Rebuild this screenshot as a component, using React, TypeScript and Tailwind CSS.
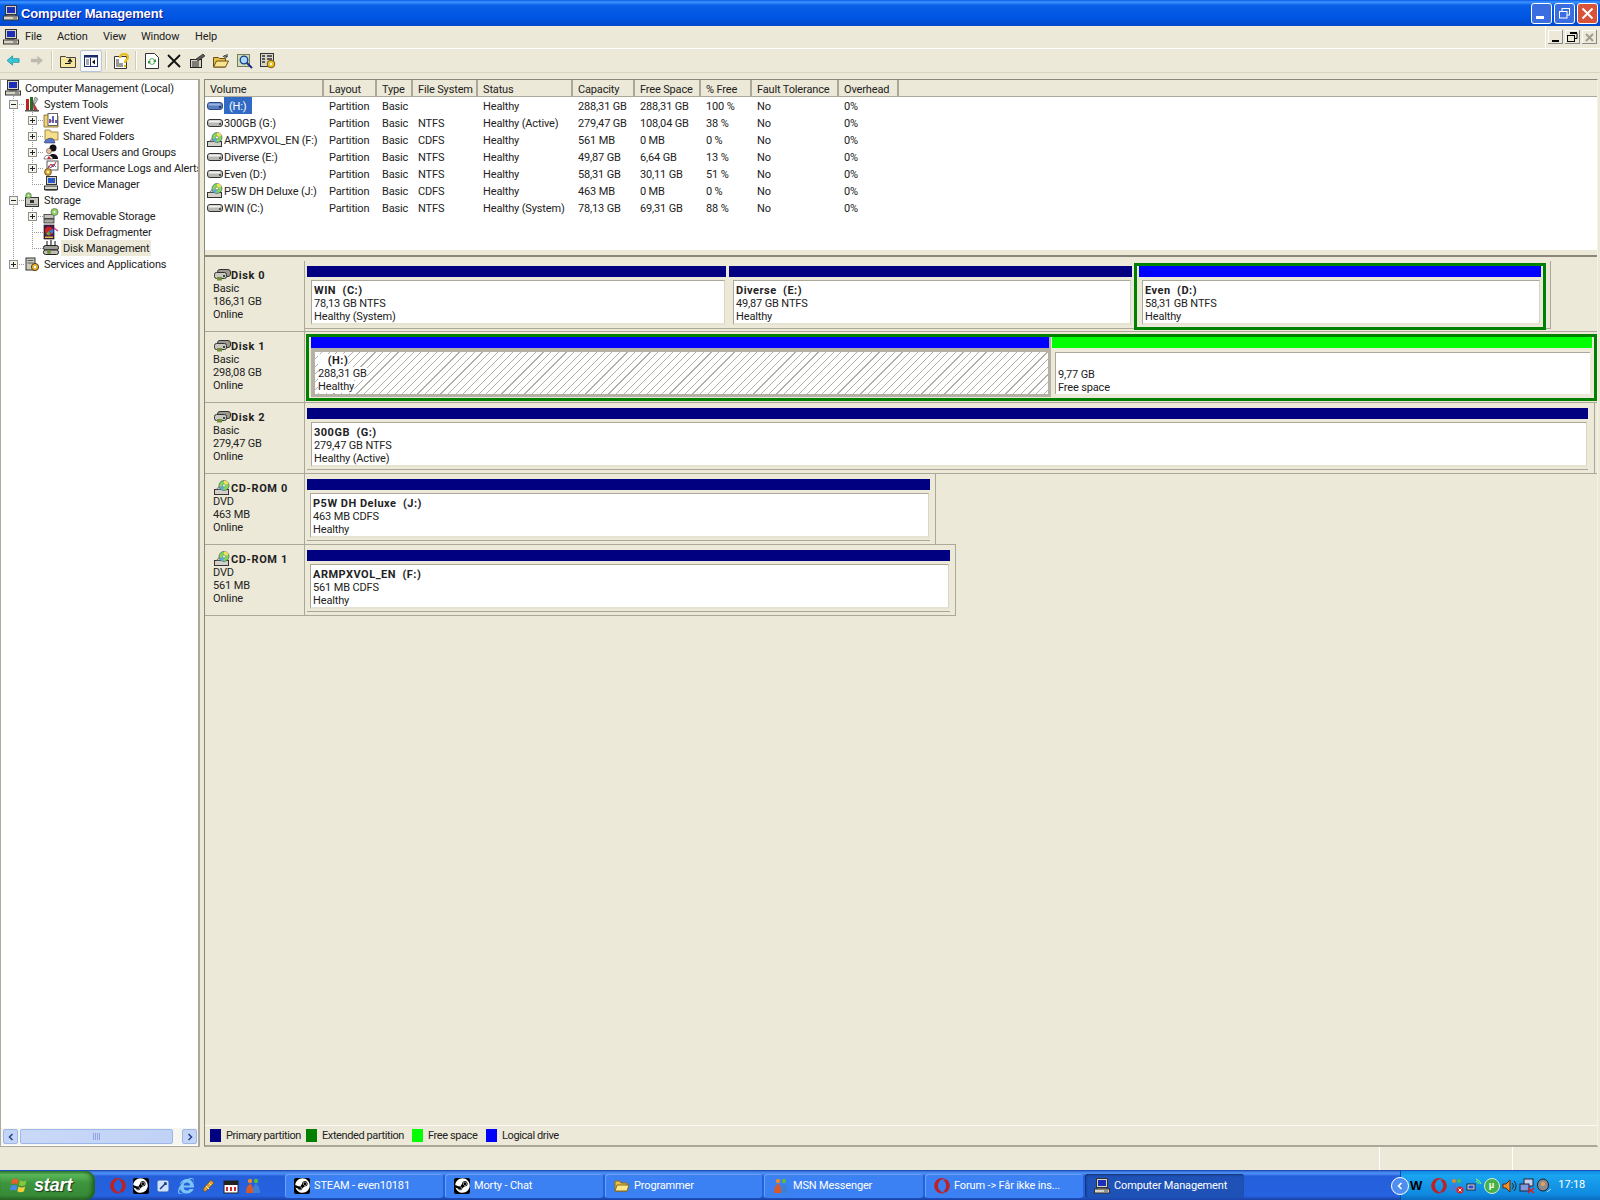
import React from "react";
import { FaSteam, FaOpera, FaInternetExplorer } from "react-icons/fa";

type SP = { className?: string };

const Pc = ({ className = "" }: SP) => (
  <svg viewBox="0 0 16 16" className={"w-4 h-4 shrink-0 " + className}>
    <rect x="2.5" y="0.5" width="11" height="9" fill="#d6d3c4" stroke="#333" />
    <rect x="4" y="2" width="8" height="6" fill="#1c2fb8" />
    <rect x="4" y="10" width="8" height="1" fill="#888" />
    <rect x="0.5" y="11" width="15" height="4" fill="#d6d3c4" stroke="#333" />
    <rect x="10" y="12.5" width="4" height="1" fill="#555" />
  </svg>
);

const Drive = ({ className = "", selected = false }: SP & { selected?: boolean }) => (
  <svg viewBox="0 0 16 16" className={"w-4 h-4 shrink-0 " + className}>
    <rect x="0.5" y="4.5" width="15" height="7" rx="2.5" fill={selected ? "#5b7fbe" : "#b9b9b4"} stroke={selected ? "#2a4a86" : "#333"} />
    <rect x="1.5" y="5.5" width="12" height="2" rx="1" fill={selected ? "#9ab4e0" : "#f1f1ef"} />
    <rect x="12" y="8" width="2" height="2" fill={selected ? "#1c3566" : "#555"} />
  </svg>
);

const CdDrive = ({ className = "" }: SP) => (
  <svg viewBox="0 0 16 16" className={"w-4 h-4 shrink-0 " + className}>
    <rect x="0.5" y="9.5" width="14" height="5" fill="#d4d2c8" stroke="#333" />
    <path d="M2.5 9.5 L5 6.5 L7 9.5Z" fill="#cfcfc8" stroke="#333" strokeWidth="0.6" />
    <circle cx="10" cy="5.5" r="5" fill="#7ed957" stroke="#446" strokeWidth="0.6" />
    <path d="M10 5.5 L14.5 3.5 A5 5 0 0 0 10 .5Z" fill="#f0e05a" />
    <path d="M10 5.5 L5.5 7.5 A5 5 0 0 0 9 10.4Z" fill="#5aa8e8" />
    <circle cx="10" cy="5.5" r="1.4" fill="#fff" stroke="#555" strokeWidth="0.5" />
  </svg>
);

const DiskSmall = ({ className = "" }: SP) => (
  <svg viewBox="0 0 17 12" className={"w-[17px] h-3 shrink-0 " + className}>
    <rect x="3.5" y="0.5" width="13" height="7" rx="2.5" fill="#9b9b94" stroke="#333" />
    <rect x="0.5" y="3.5" width="12" height="6" rx="2" fill="#c9c9c0" stroke="#333" />
    <path d="M3 11.5h5V8H3Z" fill="#6f8f3c" />
    <rect x="9" y="6" width="2" height="2" fill="#444" />
  </svg>
);

const IconSysTools = () => (
  <svg viewBox="0 0 16 16" className="w-4 h-4 shrink-0">
    <rect x="2" y="3" width="3" height="12" fill="#b22" />
    <rect x="6" y="1" width="3" height="14" fill="#2a6a2a" />
    <path d="M9 6l5 9h-4z" fill="#c33" stroke="#333" strokeWidth=".5" />
    <path d="M11 1l3 2-3 5-2-1z" fill="#bbb" stroke="#444" strokeWidth=".5" />
    <rect x="1" y="14" width="14" height="1.5" fill="#555" />
  </svg>
);
const IconEvent = () => (
  <svg viewBox="0 0 16 16" className="w-4 h-4 shrink-0">
    <path d="M1 3h5l1 1h8v11H1z" fill="#f0d27a" stroke="#7a6420" strokeWidth=".8" />
    <rect x="5" y="1.5" width="9.5" height="12" fill="#fff" stroke="#444" strokeWidth=".8" />
    <path d="M7 11V7M10 11V4M13 11V8" stroke="#2233aa" strokeWidth="1.5" />
    <path d="M7 9h3" stroke="#c22" />
  </svg>
);
const IconShared = () => (
  <svg viewBox="0 0 16 16" className="w-4 h-4 shrink-0">
    <path d="M2 2h5l1 2h7v8H2z" fill="#f6dd8a" stroke="#8a7430" strokeWidth=".8" />
    <path d="M1 14c3-4 8-5 10-2l1 3H2z" fill="#5b77cc" stroke="#224" strokeWidth=".5" />
  </svg>
);
const IconUsers = () => (
  <svg viewBox="0 0 16 16" className="w-4 h-4 shrink-0">
    <circle cx="10" cy="4" r="3.5" fill="#111" />
    <path d="M5 15c0-6 9-7 10-1v1z" fill="#111" />
    <circle cx="6" cy="7" r="2.6" fill="#e8c39e" stroke="#432" strokeWidth=".5" />
    <path d="M1 15c0-5 8-5 9 0z" fill="#fff" stroke="#333" strokeWidth=".6" />
    <path d="M4 15l2-3 2 3z" fill="#c22" />
  </svg>
);
const IconPerf = () => (
  <svg viewBox="0 0 16 16" className="w-4 h-4 shrink-0">
    <rect x="4" y="1" width="11" height="9" fill="#fff" stroke="#333" strokeWidth=".8" />
    <path d="M5 8l3-4 2 3 3-5" fill="none" stroke="#c22" />
    <path d="M5 6l3 2 2-4 3 3" fill="none" stroke="#228" strokeWidth=".7" />
    <circle cx="5" cy="12" r="3.4" fill="#e0a838" stroke="#5a4310" strokeWidth=".8" />
    <circle cx="5" cy="12" r="1.2" fill="#fff2c4" />
  </svg>
);
const IconDevMgr = () => (
  <svg viewBox="0 0 16 16" className="w-4 h-4 shrink-0">
    <rect x="3.5" y=".5" width="10" height="8" fill="#d8d5c8" stroke="#333" />
    <rect x="5" y="2" width="7" height="5" fill="#2a5ac8" />
    <rect x="1.5" y="10" width="13" height="3.5" fill="#d8d5c8" stroke="#333" />
    <path d="M1 15l2-1h10l2 1z" fill="#777" />
  </svg>
);
const IconStorage = () => (
  <svg viewBox="0 0 16 16" className="w-4 h-4 shrink-0">
    <rect x="1.5" y="5.5" width="13" height="9" fill="#c9c8bf" stroke="#333" />
    <rect x="6" y="8" width="4" height="3" fill="#333" />
    <circle cx="4.5" cy="3.5" r="2.8" fill="#8ed060" stroke="#445" strokeWidth=".5" />
    <circle cx="4.5" cy="3.5" r=".8" fill="#fff" />
    <rect x="2.5" y="12" width="11" height="1" fill="#777" />
  </svg>
);
const IconRemovable = () => (
  <svg viewBox="0 0 16 16" className="w-4 h-4 shrink-0">
    <rect x="1" y="6.5" width="10" height="4" fill="#c4c3ba" stroke="#333" strokeWidth=".8" />
    <rect x="1" y="11" width="10" height="4" fill="#a9a89f" stroke="#333" strokeWidth=".8" />
    <circle cx="11.5" cy="4" r="3.6" fill="#8ed060" stroke="#445" strokeWidth=".5" />
    <circle cx="11.5" cy="4" r="1" fill="#fff" />
  </svg>
);
const IconDefrag = () => (
  <svg viewBox="0 0 16 16" className="w-4 h-4 shrink-0">
    <rect x="1" y="1" width="10" height="14" fill="#4a1a4a" stroke="#222" strokeWidth=".7" />
    <circle cx="6" cy="7" r="4.2" fill="#c22" />
    <path d="M6 7l4-2a4.4 4.4 0 0 1-1 5z" fill="#2c7de0" />
    <path d="M6 7l-3 3a4.4 4.4 0 0 0 4 1z" fill="#44bb44" />
    <path d="M11 4l4 3" stroke="#d040a0" strokeWidth="1.5" />
    <rect x="2" y="12.5" width="8" height="1.5" fill="#e0c040" />
  </svg>
);
const IconDiskMgmt = () => (
  <svg viewBox="0 0 16 16" className="w-4 h-4 shrink-0">
    <path d="M4 1v4M8 0v5M12 1v4" stroke="#333" strokeWidth="1.2" />
    <rect x=".5" y="5.5" width="15" height="4.5" rx="2" fill="#9d9c92" stroke="#222" />
    <rect x=".5" y="10" width="15" height="4.5" rx="2" fill="#c0bfb4" stroke="#222" />
    <circle cx="6" cy="12" r="2" fill="#6f8f3c" />
  </svg>
);
const IconServices = () => (
  <svg viewBox="0 0 16 16" className="w-4 h-4 shrink-0">
    <rect x="2" y="2" width="9" height="12" fill="#cfcdc0" stroke="#333" />
    <rect x="3.5" y="4" width="6" height="1" fill="#555" />
    <rect x="3.5" y="6.5" width="6" height="1" fill="#555" />
    <circle cx="11" cy="11" r="3.6" fill="#e4b032" stroke="#5a4310" />
    <circle cx="11" cy="11" r="1.2" fill="#fff" />
  </svg>
);

const Guide = ({ level, exp, last }: { level: number; exp?: "+" | "-"; last?: boolean }) => {
  const w = level === 0 ? 4 : level === 1 ? 23 : 42;
  const cx = level === 1 ? 12 : 31;
  return (
    <svg width={w} height={16} className="shrink-0">
      {level === 2 && <line x1="12.5" y1="0" x2="12.5" y2="16" stroke="#999" strokeDasharray="1 1" />}
      {level >= 1 && (
        <>
          <line x1={cx + 0.5} y1="0" x2={cx + 0.5} y2={last ? 8 : 16} stroke="#999" strokeDasharray="1 1" />
          <line x1={cx} y1="8.5" x2={w} y2="8.5" stroke="#999" strokeDasharray="1 1" />
        </>
      )}
      {exp && (
        <>
          <rect x={cx - 4 + 0.5} y="4.5" width="8" height="8" fill="#f4f3ec" stroke="#8f8f88" />
          <line x1={cx - 2} y1="8.5" x2={cx + 3} y2="8.5" stroke="#222" />
          {exp === "+" && <line x1={cx + 0.5} y1="6" x2={cx + 0.5} y2="11" stroke="#222" />}
        </>
      )}
    </svg>
  );
};

const TreeRow = ({ level, exp, last, icon, text, sel }: { level: number; exp?: "+" | "-"; last?: boolean; icon: React.ReactNode; text: string; sel?: boolean }) => (
  <div className="flex h-4 items-center whitespace-nowrap overflow-hidden">
    <Guide level={level} exp={exp} last={last} />
    {icon}
    <span className={"ml-[2px] px-[2px] h-4 pt-px leading-4 " + (sel ? "bg-[#ece9d8]" : "")}>{text}</span>
  </div>
);

const cols = [
  { t: "Volume", w: "w-[119px]" },
  { t: "Layout", w: "w-[53px]" },
  { t: "Type", w: "w-[36px]" },
  { t: "File System", w: "w-[65px]" },
  { t: "Status", w: "w-[95px]" },
  { t: "Capacity", w: "w-[62px]" },
  { t: "Free Space", w: "w-[66px]" },
  { t: "% Free", w: "w-[51px]" },
  { t: "Fault Tolerance", w: "w-[87px]" },
  { t: "Overhead", w: "w-[60px]" },
];

const rows = [
  ["(H:)", "Partition", "Basic", "", "Healthy", "288,31 GB", "288,31 GB", "100 %", "No", "0%"],
  ["300GB (G:)", "Partition", "Basic", "NTFS", "Healthy (Active)", "279,47 GB", "108,04 GB", "38 %", "No", "0%"],
  ["ARMPXVOL_EN (F:)", "Partition", "Basic", "CDFS", "Healthy", "561 MB", "0 MB", "0 %", "No", "0%"],
  ["Diverse (E:)", "Partition", "Basic", "NTFS", "Healthy", "49,87 GB", "6,64 GB", "13 %", "No", "0%"],
  ["Even (D:)", "Partition", "Basic", "NTFS", "Healthy", "58,31 GB", "30,11 GB", "51 %", "No", "0%"],
  ["P5W DH Deluxe (J:)", "Partition", "Basic", "CDFS", "Healthy", "463 MB", "0 MB", "0 %", "No", "0%"],
  ["WIN (C:)", "Partition", "Basic", "NTFS", "Healthy (System)", "78,13 GB", "69,31 GB", "88 %", "No", "0%"],
];

const DiskLabel = ({ name, lines, cd }: { name: string; lines: string[]; cd?: boolean }) => (
  <div className="w-[100px] shrink-0 border-r border-[#aca899] pl-[8px] pt-[8px] leading-[13px]">
    <div className="flex items-center h-[13px] ml-px font-bold">
      {cd ? <CdDrive className="mr-px -mt-[2px]" /> : <DiskSmall className="-mt-[2px]" />}
      <span className="tracking-[0.6px]">{name}</span>
    </div>
    {lines.map((l) => (
      <div key={l}>{l}</div>
    ))}
  </div>
);

const Box = ({ name, l2, l3, className = "" }: { name: string; l2: string; l3: string; className?: string }) => (
  <div className={"h-[45px] mt-[3px] mr-[1px] border-t border-l border-[#aca899] border-b-2 border-b-[#e6e3d3] border-r border-r-[#d8d5c4] bg-white pl-[2px] pt-[3px] leading-[13px] whitespace-pre " + className}>
    <div className="font-bold tracking-[0.5px]">{name}</div>
    <div>{l2}</div>
    <div>{l3}</div>
  </div>
);

const Bar = ({ c }: { c: string }) => <div className={"h-[11px] " + c} />;

const Legend = ({ c, t, w }: { c: string; t: string; w: string }) => (
  <div className={"flex items-center gap-[5px] shrink-0 whitespace-nowrap " + w}>
    <div className={"w-[11px] h-[13px] " + c} />
    <span className="tracking-[-0.4px] pt-px">{t}</span>
  </div>
);

const TbSep = ({ className = "" }: SP) => <div className={"w-px h-[19px] bg-[#d0ccb8] border-r border-white box-content shrink-0 " + className} />;

const TaskBtn = ({ icon, text, w, active }: { icon: React.ReactNode; text: string; w: string; active?: boolean }) => (
  <div className={"h-6 rounded-[3px] flex items-center pl-[9px] gap-[4px] text-white shrink-0 whitespace-nowrap overflow-hidden " + w + " " + (active ? "bg-[#1e52b7] shadow-[inset_1px_1px_2px_#13306f]" : "bg-[#3c81f3] shadow-[inset_1px_1px_0_#6aa0f8]")}>
    {icon}
    <span className="pt-px">{text}</span>
  </div>
);

const SteamBox = () => (
  <div className="w-4 h-4 bg-black rounded-[2px] flex items-center justify-center shrink-0">
    <FaSteam className="w-[15px] h-[15px] text-white" />
  </div>
);
const FolderIcon = () => (
  <svg viewBox="0 0 16 16" className="w-4 h-4 shrink-0">
    <path d="M1 3h5l1 2h6v8H1z" fill="#e8c048" stroke="#8a6a18" />
    <path d="M1 13l2-6h12l-2 6z" fill="#fbe48e" stroke="#8a6a18" />
  </svg>
);
const MsnIcon = ({ className = "" }: SP) => (
  <svg viewBox="0 0 16 16" className={"w-4 h-4 shrink-0 " + className}>
    <circle cx="5" cy="3" r="2.2" fill="#e88a2a" />
    <circle cx="11" cy="3" r="2.2" fill="#58b848" />
    <path d="M1 15c0-7 3-9 5-9l2 4v5z" fill="#d85a2a" />
    <path d="M15 15c0-7-3-9-5-9l-2 4v5z" fill="#3b7fd8" />
  </svg>
);
const WinLogo = () => (
  <svg viewBox="0 0 20 20" className="w-[19px] h-[19px] shrink-0">
    <path d="M2 4c2-1.500 5-1.500 7 0l-1 5c-2-1.500-5-1.500-7 0z" fill="#e2622a" />
    <path d="M10.500 4.500c2 1.300 5 1.300 7 0l-1.300 5c-2 1.300-5 1.300-7 0z" fill="#82c83a" />
    <path d="M.8 10.500c2-1.500 5-1.500 7 0l-1.300 5c-2-1.500-5-1.500-7 0z" fill="#4a8ae8" />
    <path d="M9 11c2 1.300 5 1.300 7 0l-1.300 5c-2 1.300-5 1.300-7 0z" fill="#f6cf3a" />
  </svg>
);

const Btn = ({ children, c }: { children: React.ReactNode; c: string }) => (
  <div className={"w-[21px] h-[21px] rounded-[3px] border border-white flex items-center justify-center " + c}>{children}</div>
);

export default function App() {
  return (
    <div className="w-[1600px] h-[1200px] flex flex-col overflow-hidden bg-[#ece9d8] text-[11px] tracking-[-0.15px] text-black font-['Roboto',sans-serif]">
      {/* title bar */}
      <div className="h-[26px] shrink-0 flex items-center pl-[3px] pr-[2px] bg-[linear-gradient(180deg,#0a5ae8_0%,#3d95ff_8%,#0a5fe8_20%,#0054e3_70%,#0048c8_100%)]">
        <Pc />
        <span className="ml-[2px] pt-[2px] text-white font-bold text-[13px] tracking-[-0.15px] font-['Liberation_Sans',sans-serif] [text-shadow:1px_1px_0_#0f1089]">Computer Management</span>
        <div className="ml-auto flex gap-[2px]">
          <Btn c="bg-[#3a6ee0]"><div className="w-[8px] h-[3px] bg-white mt-[9px] -ml-[3px]" /></Btn>
          <Btn c="bg-[#3a6ee0]">
            <svg viewBox="0 0 13 13" className="w-[13px] h-[13px]"><rect x="4" y="1.500" width="7.500" height="6.500" fill="none" stroke="#fff" /><rect x="1.500" y="4.500" width="7.500" height="6.500" fill="#3a6ee0" stroke="#fff" /></svg>
          </Btn>
          <Btn c="bg-[#d9533a]">
            <svg viewBox="0 0 13 13" className="w-[13px] h-[13px]"><path d="M1.500 1.500l10 10M11.500 1.500l-10 10" stroke="#fff" strokeWidth="2" /></svg>
          </Btn>
        </div>
      </div>

      {/* menu */}
      <div className="h-[23px] shrink-0 flex items-center border-b border-white pl-[3px] pr-[3px] text-[#222]">
        <Pc />
        <span className="ml-[6px] pt-px w-[32px]">File</span>
        <span className="pt-px w-[46px]">Action</span>
        <span className="pt-px w-[38px]">View</span>
        <span className="pt-px w-[54px]">Window</span>
        <span className="pt-px">Help</span>
        <div className="ml-auto flex gap-[2px] border-l border-white pl-[2px] h-full items-center">
          <div className="w-[15px] h-[14px] bg-[#ece9d8] shadow-[inset_-1px_-1px_0_#888,inset_1px_1px_0_#fff] flex items-end justify-center pb-[2px]"><div className="w-[7px] h-[2px] bg-black" /></div>
          <div className="w-[15px] h-[14px] bg-[#ece9d8] shadow-[inset_-1px_-1px_0_#888,inset_1px_1px_0_#fff] flex items-center justify-center">
            <svg viewBox="0 0 11 10" className="w-[11px] h-[10px]"><path d="M3 1.500h7v5H8M3 .5h7" stroke="#000" fill="none" /><rect x=".5" y="3.500" width="7" height="6" fill="#ece9d8" stroke="#000" /></svg>
          </div>
          <div className="w-[15px] h-[14px] bg-[#ece9d8] shadow-[inset_-1px_-1px_0_#888,inset_1px_1px_0_#fff] flex items-center justify-center">
            <svg viewBox="0 0 9 9" className="w-[9px] h-[9px]"><path d="M1 1l7 7M8 1L1 8" stroke="#a09d8e" strokeWidth="2" /></svg>
          </div>
        </div>
      </div>

      {/* toolbar */}
      <div className="h-[24px] shrink-0 flex items-center pl-[6px] border-b border-[#d8d4c0]">
        <svg viewBox="0 0 16 14" className="w-[15px] h-[13px] shrink-0"><path d="M1 7l6-5v3h7v4H7v3z" fill="#34c8d8" stroke="#10808c" strokeWidth=".7" /></svg>
        <svg viewBox="0 0 16 14" className="w-[15px] h-[13px] shrink-0 ml-[8px]"><path d="M15 7L9 2v3H2v4h7v3z" fill="#bdbab0" /></svg>
        <TbSep className="ml-[7px]" />
        <svg viewBox="0 0 16 14" className="w-[16px] h-[14px] shrink-0 ml-[7px]"><path d="M.5 13.500V2.500h5l1 1h9v10z" fill="#f6e79a" stroke="#444" /><path d="M5 9.500h5V6M8 8l2-3 2 3" stroke="#111" fill="none" strokeWidth="1.200" /></svg>
        <div className="w-[22px] h-[22px] ml-[4px] rounded-[2px] border border-[#b8c4dc] bg-[#f8f8f4] flex items-center justify-center shrink-0">
          <svg viewBox="0 0 14 12" className="w-[14px] h-[12px]"><rect x=".5" y=".5" width="13" height="11" fill="#fff" stroke="#1a2a6c" /><rect x=".5" y=".5" width="13" height="2" fill="#1a2a6c" /><path d="M6.500 3v8" stroke="#1a2a6c" /><path d="M2 5h3M2 7h3M2 9h3" stroke="#555" /><path d="M11 4.500v5L8 7z" fill="#111" /></svg>
        </div>
        <TbSep className="ml-[3px]" />
        <svg viewBox="0 0 16 16" className="w-4 h-4 shrink-0 ml-[6px]"><path d="M1.500 3.500h12v12h-12z" fill="#fff" stroke="#333" /><path d="M3 7h3M3 9h3M3 11h7M3 13h7" stroke="#333" /><path d="M7 5c0-5 8-5 8-1 0 3-3 2-3 6" fill="none" stroke="#e8c020" strokeWidth="2.400" /><circle cx="12" cy="13" r="1.300" fill="#e8c020" /></svg>
        <TbSep className="ml-[6px]" />
        <svg viewBox="0 0 14 16" className="w-[14px] h-4 shrink-0 ml-[8px]"><path d="M.5.500h9l4 4v11H.5z" fill="#fff" stroke="#333" /><path d="M4 7a3.500 3.500 0 0 1 6 0l1-1v3H8l1-1a2 2 0 0 0-4 0z" fill="#3a9a3a" /><path d="M10 10a3.500 3.500 0 0 1-6 0l-1 1V8h3l-1 1a2 2 0 0 0 4 0z" fill="#3a9a3a" /></svg>
        <svg viewBox="0 0 14 14" className="w-[14px] h-[14px] shrink-0 ml-[8px]"><path d="M1 1l12 12M13 1L1 13" stroke="#111" strokeWidth="1.800" /></svg>
        <svg viewBox="0 0 16 16" className="w-4 h-4 shrink-0 ml-[9px]"><rect x=".5" y="6.500" width="11" height="8" fill="#d8d6c8" stroke="#222" /><path d="M2 9h7M2 11h7M2 13h7" stroke="#222" /><path d="M6 6l7-5 2 2-7 5z" fill="#555" stroke="#222" strokeWidth=".6" /></svg>
        <svg viewBox="0 0 16 14" className="w-4 h-[14px] shrink-0 ml-[7px]"><path d="M.5 13V3.500h5l1 1h6V13z" fill="#e8c048" stroke="#6a5010" /><path d="M.5 13l3-6h12l-3 6z" fill="#f8e490" stroke="#6a5010" /><path d="M10 3c1-2 3-2 4 0M14 0v3h-3" fill="none" stroke="#222" /></svg>
        <svg viewBox="0 0 16 16" className="w-4 h-4 shrink-0 ml-[8px]"><rect x=".5" y="1.500" width="12" height="12" fill="#cfe0b8" stroke="#7a7a60" /><circle cx="7" cy="7" r="3.800" fill="#a8d8f4" stroke="#1a3a8a" strokeWidth="1.300" /><path d="M10 10l5 5" stroke="#1a2a8a" strokeWidth="2" /></svg>
        <svg viewBox="0 0 16 16" className="w-4 h-4 shrink-0 ml-[7px]"><rect x=".5" y=".5" width="13" height="13" fill="#d8d6c8" stroke="#333" /><path d="M2 3h3M7 3h5M2 6h3M7 6h5M2 9h3" stroke="#333" strokeWidth="1.400" /><circle cx="11" cy="11" r="3.800" fill="#e8c020" stroke="#7a5a10" /><circle cx="11" cy="11" r="1.200" fill="#fff" /></svg>
      </div>

      {/* body */}
      <div className="flex-1 min-h-0 flex pt-[6px] pr-[2px]">
        <div className="w-[200px] shrink-0 flex flex-col bg-white border-t border-l border-[#b0ada0] border-r-2 border-r-[#aca899] border-b border-b-[#aca899] text-[#222]">
          <div className="flex-1 overflow-hidden">
            <TreeRow level={0} icon={<Pc />} text="Computer Management (Local)" />
            <TreeRow level={1} exp="-" icon={<IconSysTools />} text="System Tools" />
            <TreeRow level={2} exp="+" icon={<IconEvent />} text="Event Viewer" />
            <TreeRow level={2} exp="+" icon={<IconShared />} text="Shared Folders" />
            <TreeRow level={2} exp="+" icon={<IconUsers />} text="Local Users and Groups" />
            <TreeRow level={2} exp="+" icon={<IconPerf />} text="Performance Logs and Alerts" />
            <TreeRow level={2} last icon={<IconDevMgr />} text="Device Manager" />
            <TreeRow level={1} exp="-" icon={<IconStorage />} text="Storage" />
            <TreeRow level={2} exp="+" icon={<IconRemovable />} text="Removable Storage" />
            <TreeRow level={2} icon={<IconDefrag />} text="Disk Defragmenter" />
            <TreeRow level={2} last sel icon={<IconDiskMgmt />} text="Disk Management" />
            <TreeRow level={1} exp="+" last icon={<IconServices />} text="Services and Applications" />
          </div>
          <div className="h-[17px] shrink-0 flex items-center pl-[2px] mb-[1px] bg-[#f6f6f0]">
            <div className="w-[15px] h-[15px] shrink-0 rounded-[2px] bg-[#c4d4f6] border border-[#9fb6e8] flex items-center justify-center"><svg viewBox="0 0 8 8" className="w-2 h-2"><path d="M5.500 1L2.500 4l3 3" fill="none" stroke="#24408c" strokeWidth="1.500" /></svg></div>
            <div className="w-[153px] h-[15px] shrink-0 ml-[2px] rounded-[2px] bg-[linear-gradient(90deg,#cad8f8,#c0d2f6)] border border-[#9fb6e8] flex items-center justify-center gap-px">
              <i className="w-px h-[7px] bg-[#8ea6de]" /><i className="w-px h-[7px] bg-[#8ea6de]" /><i className="w-px h-[7px] bg-[#8ea6de]" /><i className="w-px h-[7px] bg-[#8ea6de]" />
            </div>
            <div className="w-[15px] h-[15px] shrink-0 ml-[9px] rounded-[2px] bg-[#c4d4f6] border border-[#9fb6e8] flex items-center justify-center"><svg viewBox="0 0 8 8" className="w-2 h-2"><path d="M2.500 1L5.500 4l-3 3" fill="none" stroke="#24408c" strokeWidth="1.500" /></svg></div>
          </div>
        </div>

        <div className="ml-[4px] flex-1 min-w-0 flex flex-col border-t border-l border-[#8a8778] border-b-2 border-b-[#aca899] border-r border-r-[#f4f2e8]">
          {/* list */}
          <div className="h-[170px] shrink-0 flex flex-col bg-white text-[#222]">
            <div className="h-[17px] shrink-0 flex bg-[#ece9d8] border-b border-[#aca899]">
              {cols.map((c) => (
                <div key={c.t} className={c.w + " shrink-0 pl-[5px] pt-px leading-[17px] border-r-2 border-[#aca899] whitespace-nowrap overflow-hidden"}>{c.t}</div>
              ))}
            </div>
            {rows.map((r, i) => (
              <div key={r[0]} className="flex h-[17px] leading-[17px] whitespace-nowrap">
                {r.map((v, j) => (
                  <div key={j} className={cols[j].w + " shrink-0 " + (j === 0 ? "flex items-center pl-[2px]" : "pl-[5px] pt-px")}>
                    {j === 0 ? (
                      <>
                        {i === 0 ? <Drive selected /> : v.includes("ARM") || v.includes("P5W") ? <CdDrive /> : <Drive />}
                        <span className={"h-[17px] pt-px ml-px " + (i === 0 ? "bg-[#316ac5] text-white pl-[5px] pr-[5px]" : "")}>{v}</span>
                      </>
                    ) : (
                      v
                    )}
                  </div>
                ))}
              </div>
            ))}
          </div>
          {/* splitter */}
          <div className="h-[7px] shrink-0 border-b-2 border-[#8a8778] bg-[#ece9d8]" />

          {/* graph */}
          <div className="flex-1 min-h-0 pt-[4px] text-[#222]">
            {/* Disk 0 */}
            <div className="flex h-[71px] border-b border-[#aca899]">
              <DiskLabel name="Disk 0" lines={["Basic", "186,31 GB", "Online"]} />
              <div className="flex w-[1246px] h-[68px] pl-[2px] pt-[5px] gap-[3px] border-r border-b border-[#aca899] items-start">
                <div className="w-[419px]"><Bar c="bg-[#000080]" /><Box name="WIN  (C:)" l2="78,13 GB NTFS" l3="Healthy (System)" className="ml-[4px]" /></div>
                <div className="w-[403px]"><Bar c="bg-[#000080]" /><Box name="Diverse  (E:)" l2="49,87 GB NTFS" l3="Healthy" className="ml-[4px]" /></div>
                <div className="w-[412px] -mt-[3px] -ml-px h-[67px] border-[3px] border-[#008000] px-[2px]">
                  <Bar c="bg-[#0000ff]" /><Box name="Even  (D:)" l2="58,31 GB NTFS" l3="Healthy" className="ml-[3px]" />
                </div>
              </div>
            </div>
            {/* Disk 1 */}
            <div className="flex h-[71px] border-b border-[#aca899]">
              <DiskLabel name="Disk 1" lines={["Basic", "298,08 GB", "Online"]} />
              <div className="flex w-[1291px] h-[67px] mt-[2px] ml-px border-[3px] border-[#008000] pl-[2px] items-start">
                <div className="w-[740px] h-[60px] bg-[#b5b2a5]">
                  <div className="h-[11px] w-[738px] bg-[#0000ff]" />
                  <div className="h-[42px] mt-[4px] ml-[4px] mr-[3px] bg-[repeating-linear-gradient(135deg,#ffffff_0,#ffffff_4.6px,#b0b0a8_4.6px,#b0b0a8_5.4px)] pl-[3px] pt-[2px] leading-[13px] whitespace-pre">
                    <div className="w-fit bg-white font-bold tracking-[0.5px]">{"   (H:)"}</div>
                    <div className="w-fit bg-white">288,31 GB</div>
                    <div className="w-fit bg-white">Healthy</div>
                  </div>
                </div>
                <div className="w-[540px] ml-[1px]">
                  <Bar c="bg-[#00ff00]" />
                  <div className="h-[42px] mt-[4px] ml-[3px] mr-[2px] border-t border-l border-[#aca899] bg-white pl-[2px] pt-[2px] leading-[13px] whitespace-pre">
                    <div>{" "}</div>
                    <div>9,77 GB</div>
                    <div>Free space</div>
                  </div>
                </div>
              </div>
            </div>
            {/* Disk 2 */}
            <div className="flex h-[71px] border-b border-[#aca899]">
              <DiskLabel name="Disk 2" lines={["Basic", "279,47 GB", "Online"]} />
              <div className="w-[1290px] h-[70px] pl-[2px] pt-[5px] border-r border-[#aca899]">
                <div className="mr-[6px] pb-[2px] border-b border-[#aca899]">
                  <Bar c="bg-[#000080]" /><Box name="300GB  (G:)" l2="279,47 GB NTFS" l3="Healthy (Active)" className="ml-[4px]" />
                </div>
              </div>
            </div>
            {/* CD 0 */}
            <div className="flex h-[71px] w-[751px] border-b border-[#aca899]">
              <DiskLabel cd name="CD-ROM 0" lines={["DVD", "463 MB", "Online"]} />
              <div className="w-[631px] h-[70px] pl-[2px] pt-[5px] border-r border-[#aca899]">
                <div className="mr-[5px] pb-[2px] border-b border-[#aca899]">
                  <Bar c="bg-[#000080]" /><Box name="P5W DH Deluxe  (J:)" l2="463 MB CDFS" l3="Healthy" className="ml-[3px]" />
                </div>
              </div>
            </div>
            {/* CD 1 */}
            <div className="flex h-[71px] w-[751px] border-b border-[#aca899]">
              <DiskLabel cd name="CD-ROM 1" lines={["DVD", "561 MB", "Online"]} />
              <div className="w-[651px] h-[70px] pl-[2px] pt-[5px] border-r border-[#aca899]">
                <div className="mr-[5px] pb-[2px] border-b border-[#aca899]">
                  <Bar c="bg-[#000080]" /><Box name="ARMPXVOL_EN  (F:)" l2="561 MB CDFS" l3="Healthy" className="ml-[3px]" />
                </div>
              </div>
            </div>
          </div>

          {/* legend */}
          <div className="h-[20px] shrink-0 border-t border-[#fbfaf4] flex items-center pl-[5px] text-[#222]">
            <Legend w="w-[96px]" c="bg-[#000080]" t="Primary partition" />
            <Legend w="w-[106px]" c="bg-[#008000]" t="Extended partition" />
            <Legend w="w-[74px]" c="bg-[#00ff00]" t="Free space" />
            <Legend w="w-[80px]" c="bg-[#0000ff]" t="Logical drive" />
          </div>
        </div>
      </div>

      {/* status bar */}
      <div className="h-[23px] shrink-0 flex justify-end">
        <div className="w-[133px] border-l border-white" />
        <div className="w-[88px] border-l border-white" />
      </div>

      {/* taskbar */}
      <div className="h-[30px] shrink-0 flex items-center bg-[linear-gradient(180deg,#3168d5_0%,#4f92f5_8%,#245edb_18%,#2663e0_85%,#1941a5_100%)] border-t border-[#1d4fb8]">
        <div className="w-[95px] h-full shrink-0 flex items-center pl-[10px] gap-[5px] rounded-r-[9px] bg-[linear-gradient(180deg,#3a8a3a_0%,#5cb85c_12%,#3d963d_40%,#378a37_85%,#2a6a2a_100%)] shadow-[inset_-3px_0_4px_#1f5c1f]">
          <WinLogo />
          <span className="text-white italic font-bold text-[18px] font-['Liberation_Sans',sans-serif] [text-shadow:1px_1px_1px_#1a3a1a]">start</span>
        </div>
        <div className="w-[190px] shrink-0 flex items-center pl-[15px] gap-[6.5px]">
          <FaOpera className="w-4 h-4 text-[#c02020] shrink-0" />
          <SteamBox />
          <svg viewBox="0 0 16 16" className="w-4 h-4 shrink-0"><rect x="2" y="2" width="12" height="12" rx="2" fill="#cfe2fb" stroke="#2c5cc0" /><path d="M5 11l6-6M9 5h2v2" stroke="#1a3a90" strokeWidth="1.500" fill="none" /></svg>
          <FaInternetExplorer className="w-4 h-4 text-[#7cc4f4] shrink-0" />
          <svg viewBox="0 0 16 16" className="w-4 h-4 shrink-0"><path d="M3 11L11 2l3 3-9 9z" fill="#e0a030" stroke="#7a5010" strokeWidth=".7" /><path d="M6 8l3 3M9 5l2 2" stroke="#fff2c0" /></svg>
          <svg viewBox="0 0 16 16" className="w-4 h-4 shrink-0"><rect x="1" y="3" width="14" height="12" fill="#fff" stroke="#222" /><rect x="1" y="3" width="14" height="4" fill="#222" /><path d="M3 9h2v4H3zM7 9h2v4H7zM11 9h2v4h-2z" fill="#c83030" /></svg>
          <MsnIcon />
        </div>
        <div className="flex gap-[2px] items-center">
          <TaskBtn w="w-[158px]" icon={<SteamBox />} text="STEAM - even10181" />
          <TaskBtn w="w-[158px]" icon={<SteamBox />} text="Morty - Chat" />
          <TaskBtn w="w-[157px]" icon={<FolderIcon />} text="Programmer" />
          <TaskBtn w="w-[159px]" icon={<MsnIcon />} text="MSN Messenger" />
          <TaskBtn w="w-[158px]" icon={<FaOpera className="w-4 h-4 text-[#c02020] shrink-0" />} text="Forum -> Får ikke ins..." />
          <TaskBtn active w="w-[159px]" icon={<Pc />} text="Computer Management" />
        </div>
        <div className="ml-auto w-[200px] h-full flex items-center bg-[linear-gradient(180deg,#0f8ae8_0%,#1aa4f0_15%,#0f8ae0_80%,#0a6cc0_100%)] border-l border-[#0a4ea8] text-white">
          <div className="w-[18px] h-[18px] -ml-[10px] rounded-full bg-[#4f8ef0] border border-white flex items-center justify-center shrink-0"><svg viewBox="0 0 8 8" className="w-2 h-2"><path d="M5.500 1L2.500 4l3 3" fill="none" stroke="#fff" strokeWidth="1.600" /></svg></div>
          <span className="ml-[1px] font-bold text-[13px] text-black font-['Liberation_Sans',sans-serif] w-[18px] shrink-0">W</span>
          <div className="flex items-center gap-[1.5px] ml-[3px]">
            <FaOpera className="w-4 h-4 text-[#c02020] shrink-0" />
            <svg viewBox="0 0 16 16" className="w-4 h-4 shrink-0"><circle cx="5" cy="3" r="2" fill="#e88a2a" /><circle cx="10" cy="3" r="2" fill="#58b848" /><path d="M1 13c0-6 3-8 5-8l2 4v4z" fill="#3b7fd8" /><circle cx="11" cy="12" r="3.500" fill="#e02020" /><path d="M9.500 10.500l3 3M12.500 10.500l-3 3" stroke="#fff" /></svg>
            <svg viewBox="0 0 16 16" className="w-4 h-4 shrink-0"><rect x="1" y="6" width="8" height="6" fill="#dcdce8" stroke="#223" /><rect x="2.500" y="7.500" width="5" height="3" fill="#2a4ac8" /><path d="M10 3a5 5 0 0 1 3 3M10 1a7 7 0 0 1 5 5" stroke="#8dff4a" fill="none" /></svg>
            <div className="w-4 h-4 rounded-full bg-[#48b048] border border-[#d0f0d0] flex items-center justify-center text-white font-bold text-[9px] leading-none shrink-0">µ</div>
            <svg viewBox="0 0 16 16" className="w-4 h-4 shrink-0"><path d="M2 6h3l4-4v12l-4-4H2z" fill="#e89030" stroke="#5a2a08" /><path d="M11 5a4 4 0 0 1 0 6M13 3a7 7 0 0 1 0 10" stroke="#222" fill="none" /></svg>
            <svg viewBox="0 0 16 16" className="w-4 h-4 shrink-0"><rect x="5" y="1" width="9" height="7" fill="#c8d0f0" stroke="#223" /><rect x="1" y="6" width="9" height="7" fill="#8098e0" stroke="#223" /><path d="M9 10l6 5M15 10l-6 5" stroke="#e02020" strokeWidth="1.600" /></svg>
            <svg viewBox="0 0 16 16" className="w-4 h-4 shrink-0"><ellipse cx="7" cy="7" rx="5.500" ry="6" fill="#8a8a90" stroke="#222" /><circle cx="7" cy="6" r="2.200" fill="#e0a060" /><path d="M11 14l4-3" stroke="#bcd8f4" /></svg>
          </div>
          <span className="ml-auto mr-[15px]">17:18</span>
        </div>
      </div>
    </div>
  );
}
